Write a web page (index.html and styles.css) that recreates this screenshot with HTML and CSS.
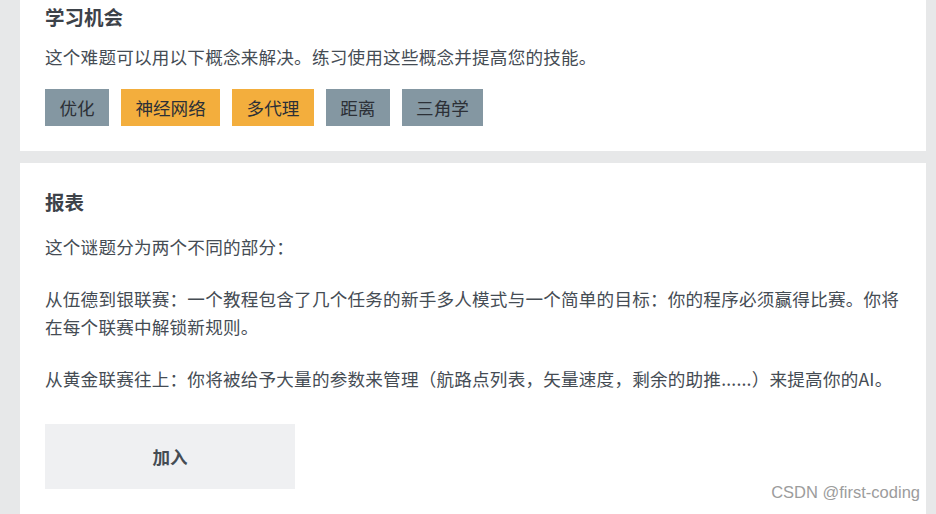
FILE: index.html
```html
<!DOCTYPE html>
<html lang="zh">
<head>
  <meta charset="UTF-8" />
  <meta name="viewport" content="width=device-width, initial-scale=1.0"/>
  <title>Puzzle | 学习机会</title>
  <link rel="stylesheet" href="styles.css">
</head>
<body>

  <div class="page">
    <section class="card card-learn">
      <h2>学习机会</h2>
      <p class="intro">这个难题可以用以下概念来解决。练习使用这些概念并提高您的技能。</p>
      <div class="tags">
        <span class="tag">优化</span>
        <span class="tag tag-hot">神经网络</span>
        <span class="tag tag-hot">多代理</span>
        <span class="tag">距离</span>
        <span class="tag">三角学</span>
      </div>
    </section>

    <section class="card card-report">
      <h2>报表</h2>
      <p>这个谜题分为两个不同的部分：</p>
      <p>从伍德到银联赛：一个教程包含了几个任务的新手多人模式与一个简单的目标：你的程序必须赢得比赛。你将在每个联赛中解锁新规则。</p>
      <p>从黄金联赛往上：你将被给予大量的参数来管理（航路点列表，矢量速度，剩余的助推......）来提高你的AI。</p>
      <button class="join-btn" type="button">加入</button>
    </section>
  </div>

  <div class="watermark">CSDN @first-coding</div>

</body>
</html>
```

FILE: styles.css
```css
body {
  margin: 0;
  font-family: "Noto Sans CJK SC", "Microsoft YaHei", sans-serif;
  background-color: #e7e8e9;
  color: #454c54;
  overflow: hidden;
}

.page {
  padding: 0 10px 0 20px;
}

.card {
  background: #fff;
  padding: 25px;
}

.card-learn {
  margin-top: -22px;
  margin-bottom: 12px;
}

.card-report {
  padding-bottom: 40px;
}

h2 {
  margin: 0;
  font-size: 19.5px;
  line-height: 28px;
  font-weight: bold;
  color: #3d4249;
}

p {
  margin: 0 0 24px;
  font-size: 17.6px;
  line-height: 28px;
  letter-spacing: 0.2px;
}

.card-learn h2 {
  margin-bottom: 12px;
}

.card-learn .intro {
  margin-bottom: 18px;
}

.card-report h2 {
  margin-bottom: 17px;
}

.tags {
  display: flex;
  gap: 12px;
}

.tag {
  display: block;
  height: 37px;
  line-height: 37px;
  padding: 0 14.4px;
  font-size: 17.6px;
  color: #2c3037;
  background-color: #8497a2;
}

.tag-hot {
  background-color: #f3ae3d;
}

.join-btn {
  display: block;
  margin-top: 31px;
  width: 250px;
  height: 65px;
  border: none;
  background-color: #eff0f2;
  color: #454c54;
  font-family: inherit;
  font-size: 17.6px;
  font-weight: bold;
  cursor: pointer;
}

.watermark {
  position: absolute;
  right: 16px;
  top: 483px;
  font-family: "Liberation Sans", Arial, sans-serif;
  font-size: 16.5px;
  color: #9c9c9c;
}
```
